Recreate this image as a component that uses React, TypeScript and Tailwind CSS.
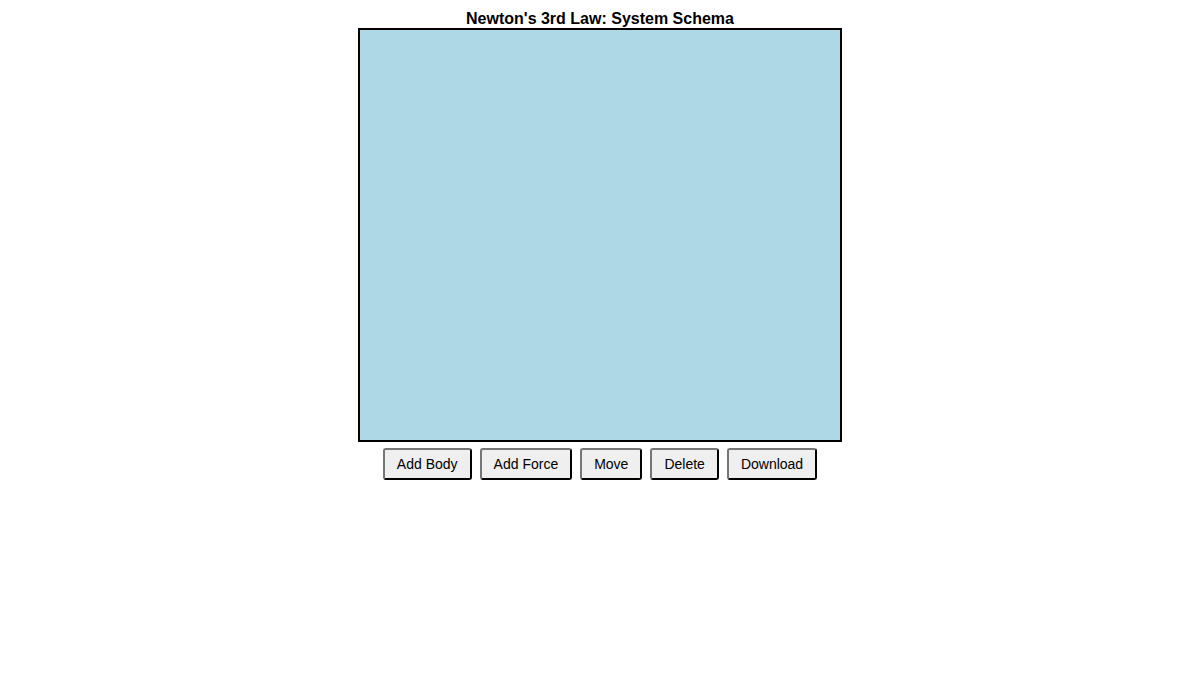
import React from "react";

const tools = ["Add Body", "Add Force", "Move", "Delete", "Download"];

const App: React.FC = () => {
    return (
        <div className="w-[1200px] h-[675px] bg-white flex flex-col items-center pt-[9px] font-['Liberation_Sans',Arial,sans-serif] text-black">
            <h1 className="text-[16px] leading-[19px] font-bold">Newton's 3rd Law: System Schema</h1>
            <div className="w-[484px] h-[414px] border-2 border-black bg-[#add8e6]" />
            <div className="flex gap-[8px] mt-[6px]">
                {tools.map((t) => (
                    <button
                        key={t}
                        className="h-[32px] px-[12px] text-[14px] leading-[16px] bg-[#efefef] rounded-[3px] border-2 border-t-[#767676] border-l-[#767676] border-r-black border-b-black"
                    >
                        {t}
                    </button>
                ))}
            </div>
        </div>
    );
};

export default App;
